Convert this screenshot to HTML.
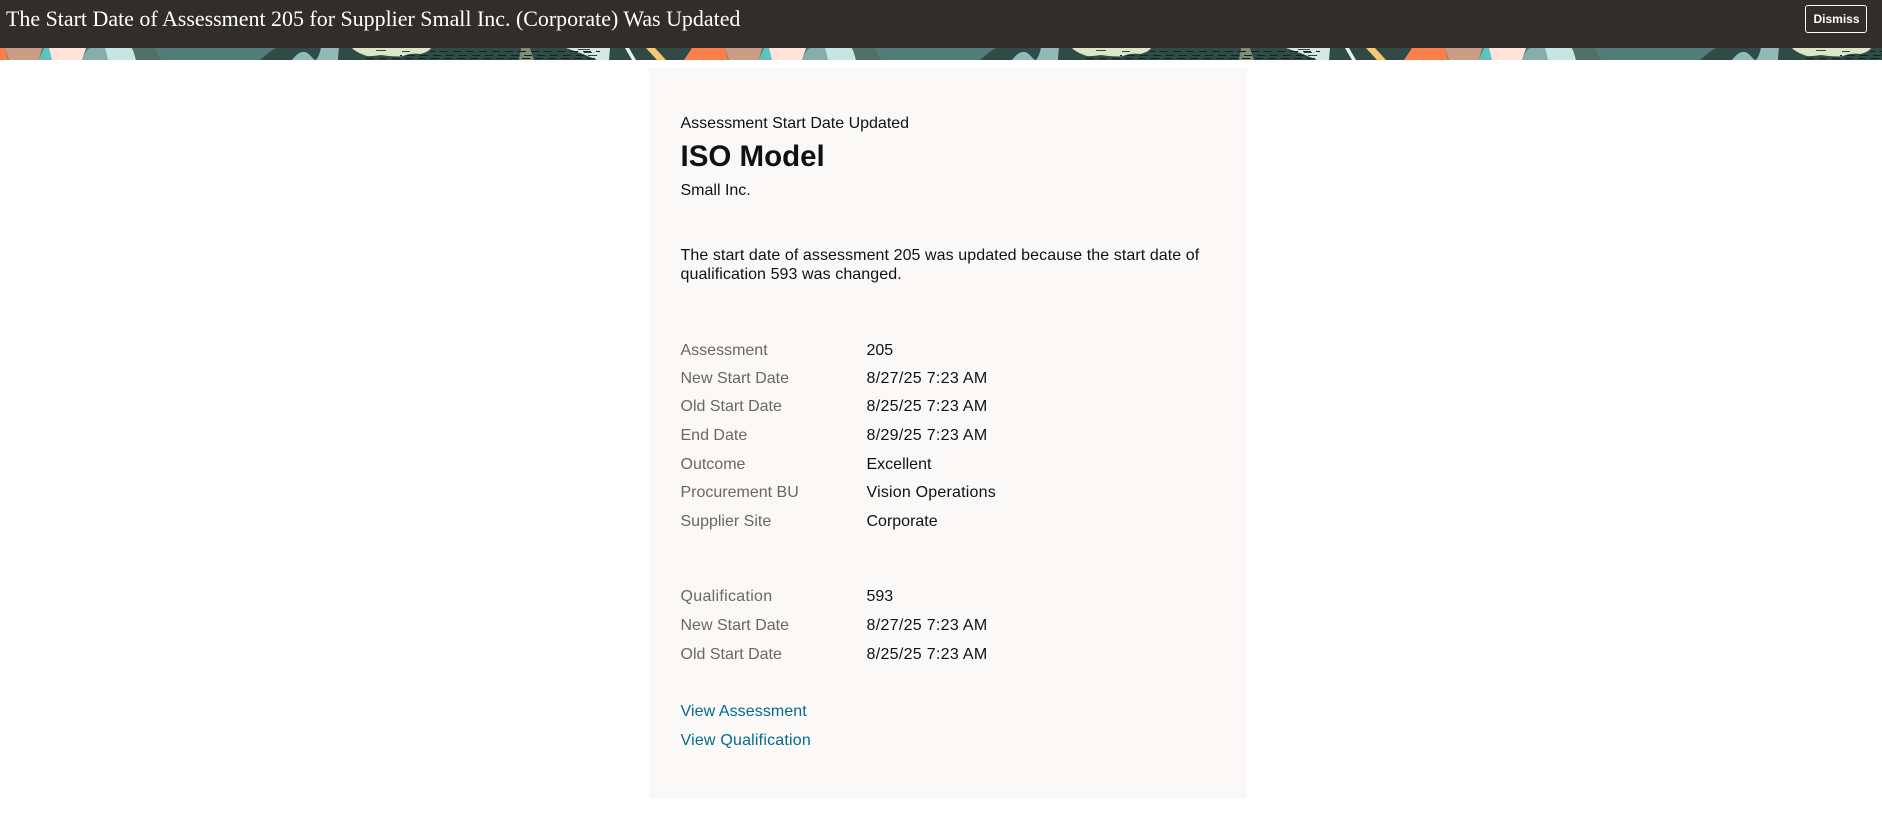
<!DOCTYPE html>
<html lang="en"><head><meta charset="utf-8"><title>Assessment Start Date Updated</title>
<style>
html,body{margin:0;padding:0;background:#fff;width:1882px;height:819px;overflow:hidden}
body{position:relative;font-family:"Liberation Sans",sans-serif;color:#111}
.bar{position:absolute;left:0;top:0;width:1882px;height:48px;background:#312d2a}
.title{position:absolute;left:6px;top:7px;font:21.95px/24px "Liberation Serif",serif;color:#fff;white-space:nowrap}
.btn{position:absolute;left:1805px;top:5px;width:60px;height:26px;border:1px solid #fff;border-radius:3px;color:#fff;font:bold 12px/26px "Liberation Sans",sans-serif;text-align:center;text-indent:1px}
svg.b{position:absolute;left:0;top:48px;display:block}
.panel{position:absolute;left:649px;top:68px;width:598px;height:731px;background:#fbf9f8}
.t{position:absolute;left:680.5px;font-size:16px;line-height:20px;white-space:nowrap;color:#111}
.l{color:#6b6662}
.v{left:866.500px}
.d{letter-spacing:.3px}
.a{color:#006b8f}
h1{position:absolute;left:680.5px;top:140px;margin:0;font:bold 29.5px/34px "Liberation Sans",sans-serif;color:#111;white-space:nowrap}
</style></head><body>
<div class="bar"></div>
<div class="title">The Start Date of Assessment 205 for Supplier Small Inc. (Corporate) Was Updated</div>
<div class="btn">Dismiss</div>
<svg class="b" width="1882" height="12" viewBox="0 0 1882 12">
<defs><g id="p">
<rect x="0" y="0" width="720" height="12" fill="#527c78"/>
<polygon points="-28,0 5,0 8,12 -36,12" fill="#fb7f4a"/>
<polygon points="5,0 42,0 39,12 9,12" fill="#cb9d85"/>
<polygon points="44,0 49,0 52,12 39,12" fill="#5fc3bd"/>
<polygon points="49,0 86,0 82,12 52,12" fill="#ffe2d8"/>
<path d="M82 12C85 5 87 1 90 0H105L108 12Z" fill="#86adac"/>
<path d="M105 0H132C134 4 135 8 136 12H108C107 8 106 4 105 0Z" fill="#c5e6e4"/>
<path d="M132 0H155L161 12H136C135 8 134 4 132 0Z" fill="#4f7068"/>
<path d="M260 12C267 6 270 3 276 0H340V12Z" fill="#2f4a47"/>
<path d="M292 12C296 7 300 3 305 4C309 5 311 9 315 12Z" fill="#93b8b8"/>
<path d="M316 12C319 8 320 4 321 0H339L338 12Z" fill="#93b8b8"/>
<polygon points="339,0 692,0 684,12 338,12" fill="#2f4a47"/>
<path d="M352 0H431C429 3 425 5 420 6C414 5 408 6 403 8C396 9 388 8 381 7C374 8 368 9 364 7C359 5 355 3 352 0Z" fill="#dde6c4"/>
<polygon points="521,0 530,0 534,12 519,12" fill="#7e8c75"/>
<polygon points="566,0 610,0 609,12 597,12 583,6" fill="#d5e6e6"/>
<polygon points="625,0 629,0 636,12 632,12" fill="#ecf3f2"/>
<polygon points="646,0 655,0 666,12 657,12" fill="#f9c76f"/>
<g stroke="#14221f" stroke-width="1" fill="none" stroke-dasharray="8 5">
<path d="M366 10.500H600"/><path d="M400 7.500H600" stroke-dashoffset="6"/><path d="M430 3.500H600" stroke-dashoffset="3"/>
</g>
<g stroke="#2f4a47" stroke-width="1" fill="none"><path d="M376 2.500H386M402 3.500H410M578 1.500H590M588 7.500H596M584 4.500H592"/></g>
</g></defs>
<use href="#p" x="0"/><use href="#p" x="720"/><use href="#p" x="1440"/>
</svg>
<div class="panel"></div>
<div class="t" style="top:114px">Assessment Start Date Updated</div>
<h1>ISO Model</h1>
<div class="t" style="top:181px">Small Inc.</div>
<div class="t" style="top:246px;letter-spacing:.08px">The start date of assessment 205 was updated because the start date of</div>
<div class="t" style="top:265px;letter-spacing:.08px">qualification 593 was changed.</div>
<div class="t l" style="top:341px">Assessment</div><div class="t v" style="top:341px">205</div>
<div class="t l" style="top:369px">New Start Date</div><div class="t v d" style="top:369px">8/27/25 7:23 AM</div>
<div class="t l" style="top:397px">Old Start Date</div><div class="t v d" style="top:397px">8/25/25 7:23 AM</div>
<div class="t l" style="top:426px">End Date</div><div class="t v d" style="top:426px">8/29/25 7:23 AM</div>
<div class="t l" style="top:455px">Outcome</div><div class="t v" style="top:455px">Excellent</div>
<div class="t l" style="top:483px">Procurement BU</div><div class="t v" style="top:483px;letter-spacing:.2px">Vision Operations</div>
<div class="t l" style="top:512px">Supplier Site</div><div class="t v" style="top:512px">Corporate</div>
<div class="t l" style="top:587px;letter-spacing:.3px">Qualification</div><div class="t v" style="top:587px">593</div>
<div class="t l" style="top:616px">New Start Date</div><div class="t v d" style="top:616px">8/27/25 7:23 AM</div>
<div class="t l" style="top:645px">Old Start Date</div><div class="t v d" style="top:645px">8/25/25 7:23 AM</div>
<div class="t a" style="top:702px;letter-spacing:.08px">View Assessment</div>
<div class="t a" style="top:731px;letter-spacing:.2px">View Qualification</div>
</body></html>
